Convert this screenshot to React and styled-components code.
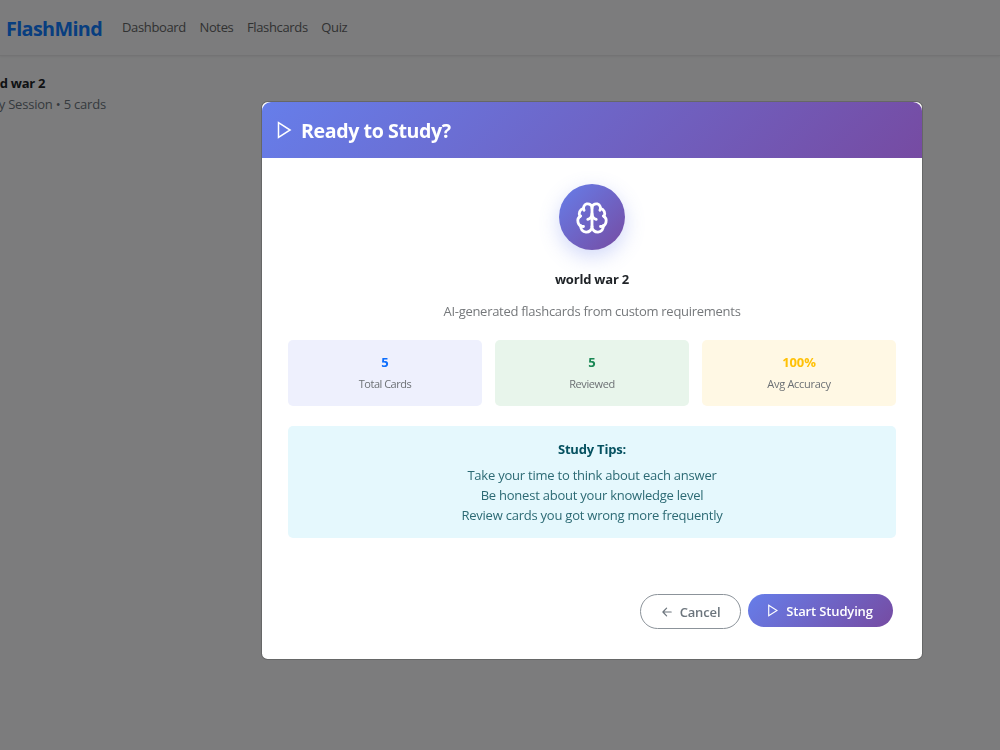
import React from 'react'
import styled, { createGlobalStyle } from 'styled-components'
import { Brain } from 'lucide-react'


const stats = [
    { value: '5', label: 'Total Cards', color: '#0d6efd', bg: '#eef0fd', space: '-0.5px' },
    { value: '5', label: 'Reviewed', color: '#198754', bg: '#e8f5eb', space: '-0.4px' },
    { value: '100%', label: 'Avg Accuracy', color: '#ffc107', bg: '#fff8e4', space: '-0.3px' },
]

const tips = [
    'Take your time to think about each answer',
    'Be honest about your knowledge level',
    'Review cards you got wrong more frequently',
]

const PlayIcon = ({ width, height, stroke }) => (
    <svg width={width} height={height} viewBox="0 0 14 18" fill="none" stroke="currentColor" strokeWidth={stroke}>
        <path d="M1 1.6 L12.6 9 L1 16.4 Z" />
    </svg>
)

const App = () => {
  return (
    <>
      <GlobalStyle />
      <Page>
        <Navbar>
          <Brand>FlashMind</Brand>
          <NavLinks>
            <NavLink>Dashboard</NavLink>
            <NavLink>Notes</NavLink>
            <NavLink>Flashcards</NavLink>
            <NavLink>Quiz</NavLink>
          </NavLinks>
        </Navbar>
        <SessionInfo>
          <SessionTitle>world war 2</SessionTitle>
          <SessionMeta>Study Session • 5 cards</SessionMeta>
        </SessionInfo>
      </Page>

      <Backdrop>
        <Modal>
          <ModalHeader>
            <PlayIcon width={15} height={18} stroke={1.5} />
            <ModalTitle>Ready to Study?</ModalTitle>
          </ModalHeader>
          <ModalBody>
            <BrainCircle>
              <Brain size={34} strokeWidth={2} />
            </BrainCircle>
            <DeckName>world war 2</DeckName>
            <DeckText>AI-generated flashcards from custom requirements</DeckText>
            <StatRow>
              {stats.map((stat) => (
                <StatCard key={stat.label} $bg={stat.bg}>
                  <StatValue $color={stat.color}>{stat.value}</StatValue>
                  <StatLabel $space={stat.space}>{stat.label}</StatLabel>
                </StatCard>
              ))}
            </StatRow>
            <TipsBox>
              <TipsTitle>Study Tips:</TipsTitle>
              {tips.map((tip) => <Tip key={tip}>{tip}</Tip>)}
            </TipsBox>
          </ModalBody>
          <ModalFooter>
            <CancelButton>
              <svg width="10" height="10" viewBox="0 0 10 10" fill="none" stroke="currentColor" strokeWidth="1.2" strokeLinecap="round" strokeLinejoin="round">
                <path d="M9.2 5 H0.9 M4.6 1.2 L0.9 5 L4.6 8.8" />
              </svg>
              Cancel
            </CancelButton>
            <StartButton>
              <PlayIcon width={10} height={13} stroke={1.6} />
              Start Studying
            </StartButton>
          </ModalFooter>
        </Modal>
      </Backdrop>
    </>
  )
}


const GlobalStyle = createGlobalStyle`
    * {
        box-sizing:border-box;
    }

    body {
        margin:0;
        overflow:hidden;
        background-color:#f8f9fa;
        font-family:"Open Sans", "Noto Sans", sans-serif;
        font-size:13px;
        color:#212529;
    }
`;

const Page = styled.div`
    height:100vh;
    overflow:hidden;
`;

const Navbar = styled.nav`
    height:56px;
    padding-left:6px;
    display:flex;
    align-items:center;
    border-bottom:1px solid #e6e7e8;
    box-shadow:0 1px 2px rgba(0,0,0,0.06);
`;

const Brand = styled.div`
    width:116px;
    padding-top:1px;
    font-size:19.8px;
    font-weight:700;
    letter-spacing:-0.65px;
    color:#107cff;
`;

const NavLinks = styled.div`
    padding-bottom:1px;
    display:flex;
    gap:13.5px;
`;

const NavLink = styled.a`
    color:#636465;
    letter-spacing:-0.35px;
`;

const SessionInfo = styled.div`
    width:106px;
    margin-top:17px;
    display:flex;
    flex-direction:column;
    align-items:flex-start;
    line-height:20.5px;
    white-space:nowrap;
`;

const SessionTitle = styled.div`
    margin-left:-28px;
    font-weight:700;
    letter-spacing:-0.3px;
`;

const SessionMeta = styled.div`
    align-self:flex-end;
    color:#6c757d;
    letter-spacing:-0.2px;
`;

const Backdrop = styled.div`
    position:fixed;
    inset:0;
    display:flex;
    align-items:flex-start;
    padding:101px 0 0 261px;
    background-color:rgba(0,0,0,0.5);
`;

const Modal = styled.div`
    width:662px;
    height:559px;
    display:flex;
    flex-direction:column;
    background-color:white;
    background-clip:padding-box;
    border:1px solid rgba(0,0,0,0.175);
    border-radius:6.6px;
`;

const ModalHeader = styled.div`
    height:56px;
    padding:0 0 1px 15px;
    display:flex;
    align-items:center;
    gap:9px;
    color:white;
    background:linear-gradient(135deg, #667eea 0%, #764ba2 100%);
    border-radius:9px 9px 0 0;
`;

const ModalTitle = styled.h5`
    margin:2px 0 0;
    font-size:19.6px;
    font-weight:700;
    line-height:28px;
    letter-spacing:-0.4px;
`;

const ModalBody = styled.div`
    padding:26.4px 26px;
    display:flex;
    flex-direction:column;
    align-items:center;
`;

const BrainCircle = styled.div`
    width:66px;
    height:66px;
    padding-top:1px;
    display:flex;
    align-items:center;
    justify-content:center;
    color:white;
    background:linear-gradient(135deg, #667eea 0%, #764ba2 100%);
    border-radius:50%;
    box-shadow:0 6.6px 20px rgba(102,126,234,0.3);
`;

const DeckName = styled.div`
    margin-top:18.6px;
    font-weight:700;
    line-height:20px;
    letter-spacing:-0.2px;
`;

const DeckText = styled.div`
    margin-top:12px;
    line-height:20px;
    color:#75787b;
    letter-spacing:-0.28px;
`;

const StatRow = styled.div`
    width:100%;
    margin-top:19px;
    display:grid;
    grid-template-columns:repeat(3, 1fr);
    gap:13px;
`;

const StatCard = styled.div`
    height:66px;
    padding-top:12px;
    text-align:center;
    background-color:${(props) => props.$bg};
    border-radius:5px;
`;

const StatValue = styled.div`
    font-weight:700;
    line-height:20px;
    letter-spacing:-0.1px;
    color:${(props) => props.$color};
`;

const StatLabel = styled.div`
    margin-top:3px;
    font-size:11px;
    line-height:17px;
    letter-spacing:${(props) => props.$space};
    color:#6c7074;
`;

const TipsBox = styled.div`
    width:100%;
    height:112px;
    margin-top:20px;
    padding-top:13px;
    text-align:center;
    color:#2c6a74;
    background-color:#e5f8fd;
    border-radius:5px;
`;

const TipsTitle = styled.div`
    margin-bottom:6px;
    font-weight:700;
    line-height:20px;
    letter-spacing:-0.2px;
    color:#055160;
`;

const Tip = styled.div`
    line-height:20px;
    letter-spacing:-0.23px;
`;

const ModalFooter = styled.div`
    margin-top:auto;
    padding:0 29.5px 30px 0;
    display:flex;
    justify-content:flex-end;
    align-items:flex-start;
    gap:6.5px;
`;

const Button = styled.button`
    padding:0;
    display:flex;
    align-items:center;
    justify-content:center;
    font-family:inherit;
    font-size:13px;
    font-weight:600;
    line-height:20px;
    border-radius:18px;
    cursor:pointer;
`;

const CancelButton = styled(Button)`
    width:101px;
    height:35px;
    padding-left:1px;
    gap:8px;
    color:#6c757d;
    letter-spacing:-0.15px;
    background-color:white;
    border:1px solid #8c939a;
`;

const StartButton = styled(Button)`
    width:145px;
    height:33px;
    padding-left:1px;
    gap:8px;
    color:white;
    letter-spacing:-0.15px;
    background:linear-gradient(135deg, #667eea 0%, #764ba2 100%);
    border:none;
`;

export default App
